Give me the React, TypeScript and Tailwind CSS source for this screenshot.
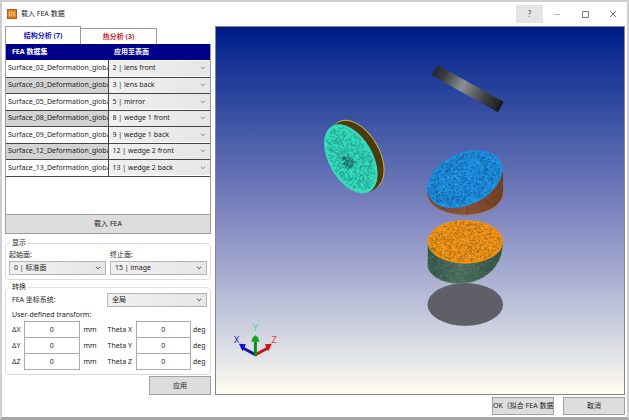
import { useState } from 'react';
import type { ReactNode } from 'react';

const dataSets = [
    { name: 'Surface_02_Deformation_globa', surface: '2 | lens front' },
    { name: 'Surface_03_Deformation_globa', surface: '3 | lens back' },
    { name: 'Surface_05_Deformation_globa', surface: '5 | mirror' },
    { name: 'Surface_08_Deformation_globa', surface: '8 | wedge 1 front' },
    { name: 'Surface_09_Deformation_globa', surface: '9 | wedge 1 back' },
    { name: 'Surface_12_Deformation_globa', surface: '12 | wedge 2 front' },
    { name: 'Surface_13_Deformation_globa', surface: '13 | wedge 2 back' },
];

const surfaceOptions = dataSets.map((d) => d.surface);

// Short strokes inside an ellipse, used as the mesh texture.
// With radial set they follow the rings and spokes of the disc.
function meshPath(rx: number, ry: number, count: number, seed: number, len: number, radial = false) {
    let s = seed;
    const rand = () => {
        s = (s * 16807) % 2147483647;
        return s / 2147483647;
    };
    let d = '';
    for (let i = 0; i < count; i++) {
        const r = Math.sqrt(rand()) * 0.97;
        const a = rand() * Math.PI * 2;
        const b = radial ? a + (rand() - 0.5) * 1.4 : rand() * Math.PI * 2;
        const x = Math.cos(a) * r * rx;
        const y = Math.sin(a) * r * ry;
        d += `M${x.toFixed(1)} ${y.toFixed(1)}l${(-Math.cos(b) * len).toFixed(1)} ${(-Math.sin(b) * len).toFixed(1)}`;
    }
    return d;
}

const tealMesh = meshPath(37, 21, 620, 11, 2.4, true);
const tealCore = meshPath(7, 5, 60, 5, 2);
const blueMesh = meshPath(39, 25, 680, 23, 2.4);
const blueLight = meshPath(39, 25, 200, 29, 2);
const brownMesh = meshPath(38, 22, 300, 71, 1.4);
const orangeMesh = meshPath(37, 21, 900, 37, 1.4);
const orangeLight = meshPath(37, 21, 380, 91, 1.4);
const greenMesh = meshPath(40, 24, 420, 53, 1.4);
const greenDark = meshPath(40, 24, 420, 59, 1.4);

function Select({ value, options, label, id, className = '', faint = false }: {
    value: string;
    options: string[];
    label?: string;
    id?: string;
    className?: string;
    faint?: boolean;
}) {
    const [selected, setSelected] = useState(value);

    return (
        <div className={`relative min-w-0 ${className}`}>
            <select
                id={id}
                aria-label={label}
                value={selected}
                onChange={(e) => setSelected(e.target.value)}
                className="block h-full w-full appearance-none rounded-none bg-linear-to-r from-[#f0f0f0] to-[#e6e6e6] pl-1 pr-3 text-[7px] leading-3 text-[#222] outline-none"
            >
                {options.map((o) => (
                    <option key={o}>{o}</option>
                ))}
            </select>
            <svg
                viewBox="0 0 6 4"
                className={`pointer-events-none absolute right-1 top-1/2 h-1 w-1.5 -translate-y-1/2 ${faint ? 'text-[#888]' : 'text-[#444]'}`}
                fill="none"
                stroke="currentColor"
            >
                <path d="M1 0.8 3 2.8 5 0.8" />
            </svg>
        </div>
    );
}

function Group({ title, children }: { title: string; children: ReactNode }) {
    return (
        <fieldset className="min-w-0 rounded-sm border border-[#dcdcdc] px-[3px] pb-1">
            <legend className="ml-px px-0.5 leading-3">{title}</legend>
            {children}
        </fieldset>
    );
}

function NumberField({ label, unit, labelClass, unitClass }: {
    label: string;
    unit: string;
    labelClass: string;
    unitClass: string;
}) {
    const [value, setValue] = useState('0');

    return (
        <label className="flex min-w-0 grow items-center">
            <span className={labelClass}>{label}</span>
            <input
                value={value}
                onChange={(e) => setValue(e.target.value)}
                className="-mt-px h-[17px] w-8 min-w-0 grow border border-[#ababab] bg-white text-center text-[7px] outline-none"
            />
            <span className={unitClass}>{unit}</span>
        </label>
    );
}

function Viewport() {
    return (
        <svg
            viewBox="215 26 409 369"
            preserveAspectRatio="xMidYMid meet"
            className="absolute inset-0 h-full w-full"
            role="img"
            aria-label="3D"
        >
            <defs>
                <linearGradient id="bar" x1="0" x2="1">
                    <stop offset="0" stopColor="#24272b" />
                    <stop offset="0.15" stopColor="#3a3d42" />
                    <stop offset="0.42" stopColor="#8c8f92" />
                    <stop offset="0.75" stopColor="#3d4045" />
                    <stop offset="0.93" stopColor="#25282c" />
                    <stop offset="1" stopColor="#141618" />
                </linearGradient>
                <linearGradient id="brown" x1="0" x2="1">
                    <stop offset="0" stopColor="#6b4a44" />
                    <stop offset="0.5" stopColor="#8c5238" />
                    <stop offset="1" stopColor="#6e4024" />
                </linearGradient>
                <linearGradient id="green" x1="0" x2="1">
                    <stop offset="0" stopColor="#35544c" />
                    <stop offset="0.45" stopColor="#4f7060" />
                    <stop offset="1" stopColor="#304c42" />
                </linearGradient>
                <clipPath id="brownBody">
                    <path d="M427 187V196C430 208 447 215 465 215C486 215 503 205 503 193V172Z" />
                </clipPath>
                <clipPath id="greenBody">
                    <path d="M427 242V267C430 279 447 285 463 284C484 282 503 268 503 242Z" />
                </clipPath>
            </defs>

            {/* mirror */}
            <rect x="-38" y="-6" width="76" height="12" transform="translate(467.5 88) rotate(29)" fill="url(#bar)" />

            {/* teal disc */}
            <g>
                <ellipse rx="38" ry="22" transform="translate(356.5 154.5) rotate(60)" fill="#4c3a10" stroke="#c9b545" />
                <ellipse rx="38" ry="22" transform="translate(355 156) rotate(60)" fill="#4c3a10" />
                <ellipse rx="38" ry="22" transform="translate(353 157.5) rotate(60)" fill="#4c3a10" />
                <g transform="translate(350 158.5) rotate(60)">
                    <ellipse rx="38" ry="22" fill="#35dcba" />
                    <path d={tealMesh} stroke="#23a093" strokeWidth="0.7" />
                    <path d={tealCore} transform="translate(1 4)" stroke="#1c6464" strokeWidth="0.8" />
                </g>
            </g>

            {/* blue wedge */}
            <path d="M427 187V196C430 208 447 215 465 215C486 215 503 205 503 193V172Z" fill="url(#brown)" />
            <g clipPath="url(#brownBody)">
                <path d={brownMesh} transform="translate(465 193)" stroke="#5a3826" strokeWidth="0.5" />
            </g>
            <path d="M427 196C430 208 447 215 465 215C486 215 503 205 503 193" fill="none" stroke="#b9713d" strokeWidth="0.8" />
            <g transform="translate(464.5 179) rotate(-25)">
                <ellipse rx="40" ry="26" fill="#1c8ee0" />
                <path d={blueMesh} stroke="#1a5f9e" strokeWidth="0.7" />
                <path d={blueLight} stroke="#28a4f6" strokeWidth="0.7" />
            </g>

            {/* orange wedge */}
            <path d="M427 242V267C430 279 447 285 463 284C484 282 503 268 503 242Z" fill="url(#green)" stroke="#7fae8c" strokeWidth="0.8" />
            <g clipPath="url(#greenBody)">
                <path d={greenMesh} transform="translate(465 264)" stroke="#6f8f7c" strokeWidth="0.4" />
                <path d={greenDark} transform="translate(465 264)" stroke="#2c473e" strokeWidth="0.4" />
            </g>
            <g transform="translate(465 242)">
                <ellipse rx="38" ry="22" fill="#ee9216" />
                <path d={orangeMesh} stroke="#98601a" strokeWidth="0.7" />
                <path d={orangeLight} stroke="#ffa51e" strokeWidth="0.8" />
            </g>

            <ellipse cx="465" cy="305" rx="38" ry="21.5" fill="#5f6067" />

            {/* axes */}
            <g strokeWidth="3">
                <path d="M254 355.5 242 349" stroke="#1414a8" />
                <path d="M237.5 344.5 244.5 345 241 352Z" fill="#1010c8" />
                <path d="M254 355.5 266 349" stroke="#b81818" />
                <path d="M270.5 344.5 263.5 345 267 352Z" fill="#d01414" />
                <path d="M254 357V341" stroke="#0c8c18" />
                <path d="M250 342.5Q250.500 338 254 336Q257.500 338 258 342.5Z" fill="#10a820" />
            </g>
            <g fontFamily="Roboto, sans-serif" fontSize="9" textAnchor="middle">
                <text x="235" y="344" fill="#3030c0">X</text>
                <text x="254" y="332" fill="#50d880">Y</text>
                <text x="273" y="344" fill="#e04848">Z</text>
            </g>
        </svg>
    );
}

export default function App() {
    const [tab, setTab] = useState(0);
    const caption = 'flex w-7 items-center justify-center text-[#555]';
    const button = 'flex items-center justify-center border border-[#a0a0a0] bg-[#dddddd]';

    return (
        <div className="flex h-screen flex-col border-2 border-b-[3px] border-[#cfcfcf] border-b-[#a8a8a8] bg-white font-['Noto_Sans','Noto_Sans_CJK_SC',sans-serif] text-[7px] leading-3 text-[#1c1c1c]">
            <header className="flex h-6 shrink-0 items-center pl-[5px]">
                <svg viewBox="0 0 10 10" className="mr-1 size-[10px] shrink-0">
                    <rect width="10" height="10" fill="#e07b1c" />
                    <rect x="0.5" y="0.5" width="9" height="9" fill="none" stroke="#b85c10" />
                    <path d="M4.5 3.2H2.2V6.8H4.5ZM8 3.2H6V5H7.800V6.8H5.8" fill="none" stroke="#ffd9a0" strokeWidth="0.8" />
                </svg>
                <h1 className="flex-1">载入 FEA 数据</h1>
                <button type="button" className="flex h-[18px] w-[27px] items-center justify-center bg-[#e5e5e5] text-[8px] text-[#555]">?</button>
                <button type="button" aria-label="Minimize" className={caption}>
                    <svg viewBox="0 0 8 8" className="size-2" stroke="#bbb"><path d="M1 4.5H7" /></svg>
                </button>
                <button type="button" aria-label="Maximize" className={caption}>
                    <svg viewBox="0 0 8 8" className="size-2" fill="none" stroke="#777"><path d="M1.5 1.5H7.5V7.5H1.5Z" /></svg>
                </button>
                <button type="button" aria-label="Close" className={caption}>
                    <svg viewBox="0 0 8 8" className="size-2" fill="none" stroke="#666" strokeWidth="0.9"><path d="M1 1 7 7M7 1 1 7" /></svg>
                </button>
            </header>

            <main className="flex min-h-0 flex-1 gap-1 pl-[3px] pr-0.5">
                <section className="flex w-[206px] shrink-0 flex-col">
                    <div role="tablist" className="flex h-[18px] shrink-0 items-end font-bold">
                        <button
                            type="button"
                            role="tab"
                            aria-selected={tab === 0}
                            onClick={() => setTab(0)}
                            className="h-[18px] w-[76px] border border-b-0 border-[#9a9a9a] bg-white text-[#1414b4]"
                        >
                            结构分析 (7)
                        </button>
                        <button
                            type="button"
                            role="tab"
                            aria-selected={tab === 1}
                            onClick={() => setTab(1)}
                            className="h-4 w-[76px] border border-b-0 border-l-0 border-[#9a9a9a] bg-white text-[#c81e1e]"
                        >
                            热分析 (3)
                        </button>
                    </div>

                    <div className="h-[170px] shrink-0 border-x border-[#9a9a9a]">
                        <table className="w-full table-fixed border-collapse">
                            <thead>
                                <tr className="h-4 bg-[#00008b] text-left text-white">
                                    <th className="p-0 pl-1.5">FEA 数据集</th>
                                    <th className="p-0 pl-1.5">应用至表面</th>
                                </tr>
                            </thead>
                            <tbody>
                                {dataSets.map((d) => (
                                    <tr key={d.name} className="h-4 border-b border-[#444] odd:h-[17px] even:bg-[#d3d3d3]">
                                        <td className="overflow-hidden whitespace-nowrap border-r border-[#444] p-0 pl-0.5">{d.name}</td>
                                        <td className="p-0">
                                            <Select value={d.surface} options={surfaceOptions} label={d.name} className="h-[15px]" faint />
                                        </td>
                                    </tr>
                                ))}
                            </tbody>
                        </table>
                    </div>

                    <button type="button" className={`${button} h-5 shrink-0`}>载入 FEA</button>

                    <div className="mt-[3px] flex flex-col gap-px">
                        <Group title="显示">
                            <div className="flex gap-1">
                                <div className="min-w-0 flex-1">
                                    <label htmlFor="start" className="block h-3">起始面:</label>
                                    <Select id="start" value="0 | 标准面" options={['0 | 标准面', ...surfaceOptions]} className="h-[14px] border border-[#b4b4b4]" />
                                </div>
                                <div className="min-w-0 flex-1">
                                    <label htmlFor="end" className="block h-3">终止面:</label>
                                    <Select id="end" value="15 | image" options={[...surfaceOptions, '15 | image']} className="h-[14px] border border-[#b4b4b4]" />
                                </div>
                            </div>
                        </Group>
                        <Group title="转换">
                            <div className="flex items-center pl-[3px]">
                                <label htmlFor="cs" className="flex-1">FEA 坐标系统:</label>
                                <Select id="cs" value="全局" options={['全局', '局部']} className="h-[14px] w-[100px] border border-[#b4b4b4]" />
                            </div>
                            <p className="pl-[3px] pt-0.5 pb-px">User-defined transform:</p>
                            <div className="pl-[3px]">
                                {['X', 'Y', 'Z'].map((axis) => (
                                    <div key={axis} className="flex h-4 items-center">
                                        <NumberField label={`Δ${axis}`} unit="mm" labelClass="w-3 shrink-0" unitClass="w-7 shrink-0 pl-1" />
                                        <NumberField label={`Theta ${axis}`} unit="deg" labelClass="w-7 shrink-0" unitClass="w-4 shrink-0 pl-0.5" />
                                    </div>
                                ))}
                            </div>
                        </Group>
                    </div>

                    <button type="button" className={`${button} mt-px h-[19px] w-[62px] shrink-0 self-end`}>应用</button>
                </section>

                <section className="relative min-w-0 flex-1 border border-[#888] bg-linear-to-b from-[#001888] via-[#7c83be] to-[#fffdf0]">
                    <Viewport />
                </section>
            </main>

            <footer className="flex h-[22px] shrink-0 items-center justify-end gap-[9px] pr-0.5">
                <button type="button" className={`${button} h-[18px] w-[62px] overflow-hidden whitespace-nowrap`}>
                    <span className="w-full overflow-hidden text-left">OK（拟合 FEA 数据</span>
                </button>
                <button type="button" className={`${button} h-[18px] w-[62px]`}>取消</button>
            </footer>
        </div>
    );
}
